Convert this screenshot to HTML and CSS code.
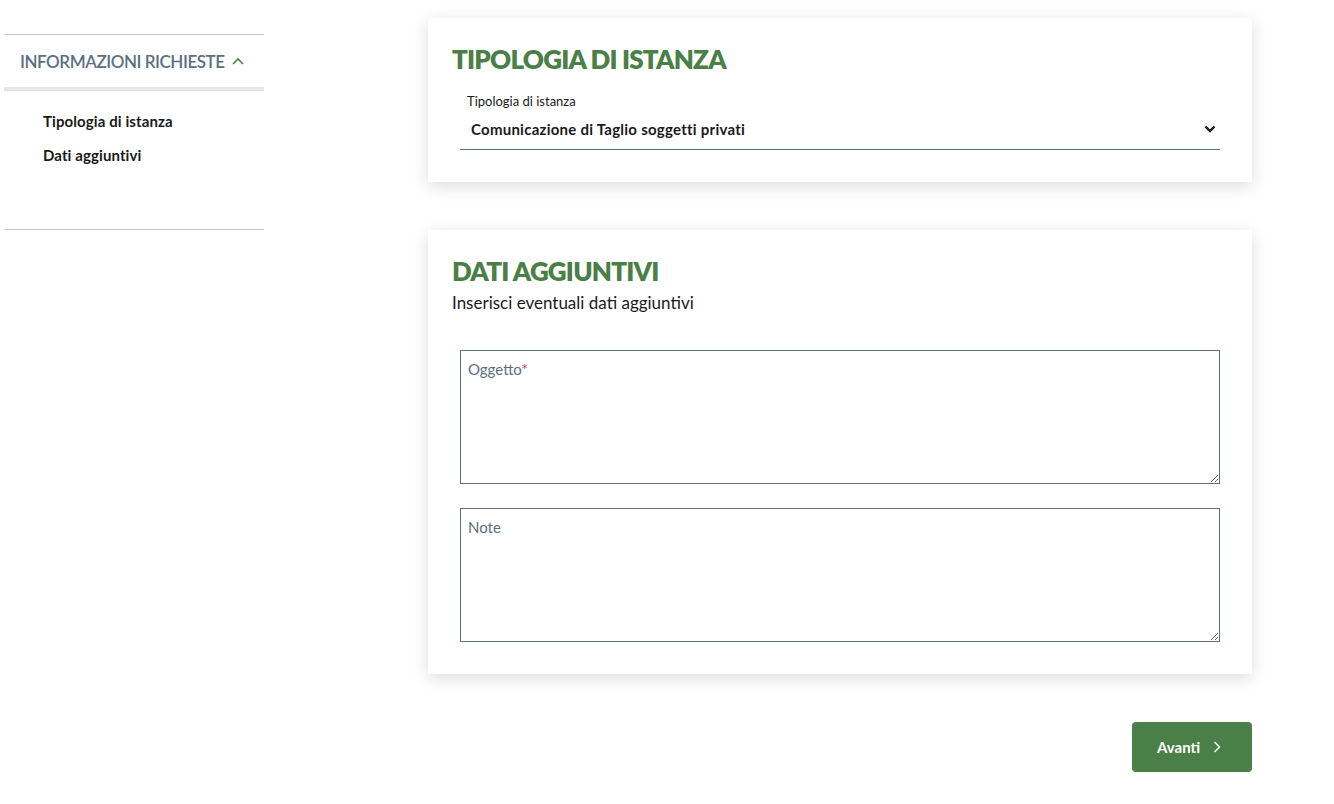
FILE: index.html
```html
<!DOCTYPE html>
<html lang="it">
<head>
  <meta charset="UTF-8">
  <meta name="viewport" content="width=device-width, initial-scale=1.0">
  <title>Nuova istanza</title>
  <link rel="stylesheet" href="styles.css">
</head>
<body>
  <div class="page">
    <aside class="sidebar">
      <div class="nav-head">
        <span>INFORMAZIONI RICHIESTE</span>
        <svg class="chev-up" width="14" height="10" viewBox="0 0 14 10"><path d="M2 8 L7 3 L12 8" fill="none" stroke="#4a7f47" stroke-width="1.6"/></svg>
      </div>
      <ul class="nav-list">
        <li><a href="#tipologia">Tipologia di istanza</a></li>
        <li><a href="#dati">Dati aggiuntivi</a></li>
      </ul>
    </aside>

    <main class="content">
      <section class="card" id="tipologia">
        <h2>TIPOLOGIA DI ISTANZA</h2>
        <div class="select-field">
          <label>Tipologia di istanza</label>
          <div class="select">
            <span>Comunicazione di Taglio soggetti privati</span>
            <svg width="12" height="8" viewBox="0 0 12 8"><path d="M1.5 1.5 L6 6 L10.5 1.5" fill="none" stroke="#1a1a1a" stroke-width="2.4"/></svg>
          </div>
        </div>
      </section>

      <section class="card card-dati" id="dati">
        <h2>DATI AGGIUNTIVI</h2>
        <p class="lead">Inserisci eventuali dati aggiuntivi</p>
        <div class="area">
          <span class="ph">Oggetto<span class="req">*</span></span>
          <textarea></textarea>
        </div>
        <div class="area">
          <span class="ph">Note</span>
          <textarea></textarea>
        </div>
      </section>

      <div class="actions">
        <button class="btn">Avanti
          <svg width="10" height="14" viewBox="0 0 10 14"><path d="M2.5 2 L7.5 7 L2.5 12" fill="none" stroke="#fff" stroke-width="1.4"/></svg>
        </button>
      </div>
    </main>
  </div>
</body>
</html>
```

FILE: styles.css
```css
body {
  margin: 0;
  background: #fff;
  font-family: Lato, "Noto Sans", sans-serif;
  color: #1a1a1a;
}
.page {
  display: flex;
  padding: 18px 0 0 4px;
}
.sidebar {
  width: 260px;
  margin-top: 16px;
  border-top: 1px solid #c5c7c9;
  border-bottom: 1px solid #c5c7c9;
  height: 196px;
  box-sizing: border-box;
}
.nav-head {
  display: flex;
  align-items: flex-start;
  gap: 6px;
  padding: 16px 0 0 16px;
  height: 56px;
  box-sizing: border-box;
  border-bottom: 4px solid #e6e6e6;
  color: #5c6f82;
  font-size: 17px;
  font-weight: 600;
}
.nav-head span { letter-spacing: -0.45px; }
.chev-up { margin-top: 5px; }
.nav-list {
  list-style: none;
  margin: 0;
  padding: 20px 0 0 39px;
}
.nav-list li { height: 34px; }
.nav-list a {
  color: #1a1a1a;
  text-decoration: none;
  font-size: 15px;
  font-weight: 700;
  letter-spacing: 0.1px;
}
.content {
  width: 824px;
  margin-left: 164px;
}
.card {
  background: #fff;
  box-shadow: 0 4px 16px rgba(0,0,0,0.14);
  padding: 26px 32px 32px 24px;
}
.card h2 {
  margin: 0;
  color: #4a7f47;
  font-size: 26px;
  font-weight: 800;
  letter-spacing: -0.8px;
  line-height: 30px;
}
.select-field {
  margin-top: 19px;
  padding-left: 8px;
}
.select-field label {
  display: block;
  font-size: 13px;
  padding-left: 7px;
  line-height: 16px;
}
.select {
  display: flex;
  justify-content: space-between;
  align-items: center;
  height: 40px;
  border-bottom: 1px solid #5c6f82;
  padding: 0 4px 0 11px;
  font-size: 15px;
  font-weight: 700;
  letter-spacing: 0.25px;
}
.card-dati {
  margin-top: 48px;
  padding-bottom: 32px;
}
.lead {
  margin: 6px 0 37px;
  font-size: 17px;
}
.area {
  position: relative;
  margin: 0 0 24px 8px;
}
.area:last-child { margin-bottom: 0; }
.area textarea {
  display: block;
  width: 100%;
  height: 134px;
  box-sizing: border-box;
  border: 1px solid #5c6f82;
  border-radius: 0;
  resize: vertical;
  font-family: inherit;
}
.ph {
  position: absolute;
  left: 8px;
  top: 10px;
  color: #5c6f82;
  font-size: 15px;
}
.req { color: #d9364f; }
.actions {
  display: flex;
  justify-content: flex-end;
  margin-top: 48px;
}
.btn {
  display: flex;
  align-items: center;
  gap: 12px;
  height: 50px;
  width: 120px;
  padding: 0 0 0 25px;
  background: #4a7f47;
  color: #fff;
  border: none;
  border-radius: 4px;
  font-family: inherit;
  font-size: 15px;
  font-weight: 700;
}
```
